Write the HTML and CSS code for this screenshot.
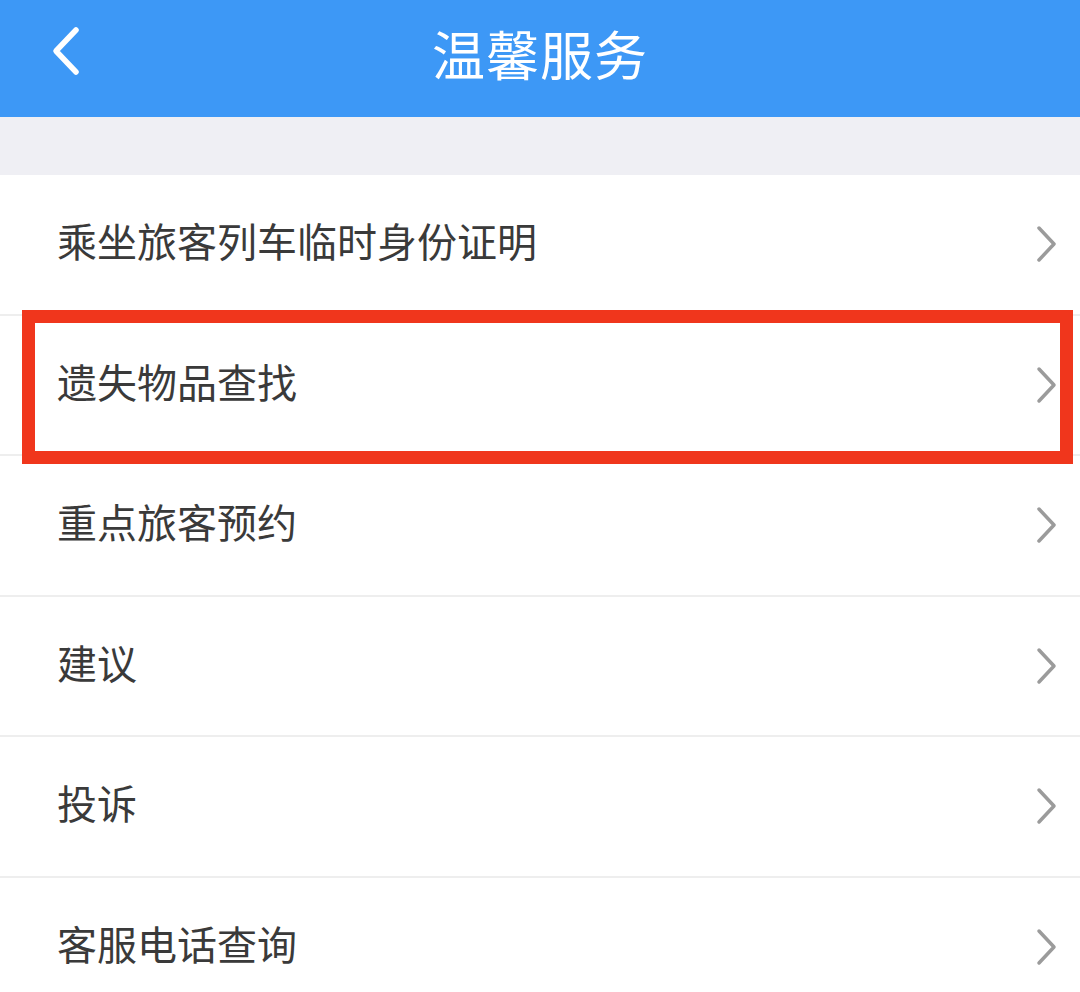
FILE: index.html
```html
<!DOCTYPE html>
<html lang="zh-CN">
<head>
<meta charset="utf-8">
<link rel="stylesheet" href="styles.css">
</head>
<body>
<div class="page">
  <header class="topbar">
    <svg class="back" width="40" height="50" viewBox="0 0 40 50"><path d="M30 4 L10 25 L30 46" fill="none" stroke="#fff" stroke-width="5.5" stroke-linecap="round" stroke-linejoin="round"/></svg>
    <h1 class="title">温馨服务</h1>
  </header>
  <div class="gap"></div>
  <ul class="list">
    <li class="row"><span class="label">乘坐旅客列车临时身份证明</span><svg class="chev" width="26" height="40" viewBox="0 0 26 40"><path d="M5 4 L20 20 L5 36" fill="none" stroke="#9b9b9b" stroke-width="3.5" stroke-linecap="round" stroke-linejoin="round"/></svg></li>
    <li class="row"><span class="label">遗失物品查找</span><svg class="chev" width="26" height="40" viewBox="0 0 26 40"><path d="M5 4 L20 20 L5 36" fill="none" stroke="#9b9b9b" stroke-width="3.5" stroke-linecap="round" stroke-linejoin="round"/></svg><div class="highlight"></div></li>
    <li class="row"><span class="label">重点旅客预约</span><svg class="chev" width="26" height="40" viewBox="0 0 26 40"><path d="M5 4 L20 20 L5 36" fill="none" stroke="#9b9b9b" stroke-width="3.5" stroke-linecap="round" stroke-linejoin="round"/></svg></li>
    <li class="row"><span class="label">建议</span><svg class="chev" width="26" height="40" viewBox="0 0 26 40"><path d="M5 4 L20 20 L5 36" fill="none" stroke="#9b9b9b" stroke-width="3.5" stroke-linecap="round" stroke-linejoin="round"/></svg></li>
    <li class="row"><span class="label">投诉</span><svg class="chev" width="26" height="40" viewBox="0 0 26 40"><path d="M5 4 L20 20 L5 36" fill="none" stroke="#9b9b9b" stroke-width="3.5" stroke-linecap="round" stroke-linejoin="round"/></svg></li>
    <li class="row"><span class="label">客服电话查询</span><svg class="chev" width="26" height="40" viewBox="0 0 26 40"><path d="M5 4 L20 20 L5 36" fill="none" stroke="#9b9b9b" stroke-width="3.5" stroke-linecap="round" stroke-linejoin="round"/></svg></li>
  </ul>
</div>
</body>
</html>
```

FILE: styles.css
```css
html, body {
  margin: 0;
  padding: 0;
  background: #ffffff;
  font-family: "Noto Sans CJK SC", "Noto Sans", sans-serif;
}
.page {
  width: 1080px;
  height: 992px;
  overflow: hidden;
}
.topbar {
  height: 117px;
  background: #3d98f6;
  display: flex;
  align-items: center;
  justify-content: center;
  position: relative;
}
.back {
  position: absolute;
  left: 46px;
  top: 26px;
}
.title {
  margin: 0;
  color: #ffffff;
  font-size: 53px;
  font-weight: 400;
  letter-spacing: 1px;
  line-height: 1;
  padding-bottom: 10px;
}
.gap {
  height: 58px;
  background: #efeff4;
}
.list {
  list-style: none;
  margin: 0;
  padding: 0;
}
.row {
  height: 138.5px;
  display: flex;
  align-items: center;
  justify-content: space-between;
  padding: 0 20px 0 57px;
  border-bottom: 2px solid #eeeeee;
  position: relative;
}
.label {
  font-size: 40px;
  color: #3a3a3a;
  line-height: 1;
  padding-bottom: 8px;
}
.chev {
  display: block;
  margin-top: 0;
}
.highlight {
  position: absolute;
  left: 22px;
  top: -6px;
  width: 1051px;
  height: 154px;
  box-sizing: border-box;
  border: 13px solid #f0361c;
}
```
